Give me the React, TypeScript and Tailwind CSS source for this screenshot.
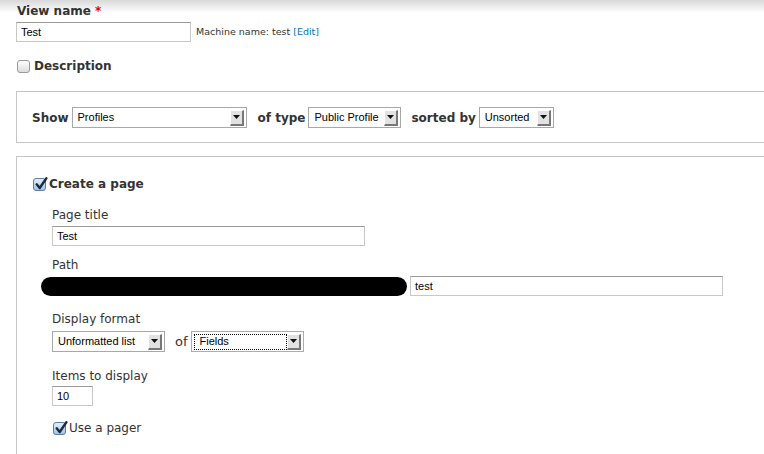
import React from "react";

const labelFont = "font-['DejaVu_Sans',sans-serif]";
const fieldFont = "font-['Liberation_Sans',Arial,sans-serif]";

const Checkbox = ({ checked }: { checked?: boolean }) => (
  <span
    className={`relative inline-flex h-[13px] w-[13px] shrink-0 items-center justify-center rounded-[3px] border ${
      checked
        ? "border-[#5d7fa6] bg-gradient-to-b from-[#e4effb] to-[#9fc3ea]"
        : "border-[#9a9a9a] bg-gradient-to-b from-white to-[#dcdcdc]"
    }`}
  >
    {checked && (
      <svg viewBox="0 0 13 13" className="absolute -top-[2px] left-[0px] h-[14px] w-[14px]">
        <path d="M2.5 6.8 L5.3 10.2 L11.5 1.2" fill="none" stroke="#1d2a3a" strokeWidth="2.2" strokeLinecap="round" strokeLinejoin="round" />
      </svg>
    )}
  </span>
);

const TextInput = ({ value, width }: { value: string; width: string }) => (
  <div
    className={`${width} ${fieldFont} flex h-[20px] shrink-0 items-center border border-[#c8c8c8] border-t-[#999] bg-white pl-[4px] text-[11px] text-black`}
  >
    {value}
  </div>
);

const Select = ({ value, width, focused }: { value: string; width: string; focused?: boolean }) => (
  <div
    className={`${width} ${fieldFont} flex h-[21px] shrink-0 items-center border bg-white text-[11px] text-black ${
      focused ? "border-[#8fb2e4]" : "border-[#a8a8a8]"
    }`}
  >
    <span
      className={`flex h-[16px] flex-1 items-center pl-[5px] ${
        focused ? "ml-[2px] border border-dotted border-black pl-[3px]" : ""
      }`}
    >
      {value}
    </span>
    <span className="mr-[2px] flex h-[16px] w-[14px] items-center justify-center border-[1px] border-b-[2px] border-r-[2px] border-t-white border-l-white border-b-[#777] border-r-[#777] bg-[#e2e2e2]">
      <svg viewBox="0 0 7 4" className="h-[4px] w-[7px]">
        <path d="M0 0 H7 L3.5 4 Z" fill="#111" />
      </svg>
    </span>
  </div>
);

const Label = ({ children }: { children: React.ReactNode }) => (
  <div className={`${labelFont} text-[12px] leading-[14px] text-[#333]`}>{children}</div>
);

export default function App() {
  return (
    <div className="relative h-[454px] w-[764px] overflow-hidden bg-white">
      {/* top toolbar shadow */}
      <div className="pointer-events-none absolute inset-x-0 top-0 h-[13px] bg-gradient-to-b from-black/15 to-transparent" />

      <div className="pl-[16px] pt-[4px]">
        <div className={`${labelFont} pl-[1px] text-[12px] font-bold leading-[14px] text-[#333]`}>
          View name <span className="text-[#e00]">*</span>
        </div>

        <div className="mt-[4px] flex items-center">
          <TextInput value="Test" width="w-[175px]" />
          <span className={`${labelFont} ml-[5px] text-[9.5px] text-[#333]`}>
            Machine name: test <a className="text-[#0074bd]">[Edit]</a>
          </span>
        </div>

        <div className="mt-[16px] flex h-[16px] items-center pl-[1px]">
          <Checkbox />
          <span className={`${labelFont} ml-[4px] text-[12px] font-bold text-[#333]`}>Description</span>
        </div>

        <div className="mt-[17px] flex h-[52px] w-[760px] items-center border border-r-0 border-[#c6c6c6] pl-[15px] pt-[1px]">
          <span className={`${labelFont} mr-[3px] text-[12px] font-bold text-[#333]`}>Show</span>
          <Select value="Profiles" width="w-[175px]" />
          <span className={`${labelFont} ml-[11px] mr-[3px] text-[12px] font-bold text-[#333]`}>of type</span>
          <Select value="Public Profile" width="w-[93px]" />
          <span className={`${labelFont} ml-[10px] mr-[3px] text-[12px] font-bold text-[#333]`}>sorted by</span>
          <Select value="Unsorted" width="w-[75px]" />
        </div>

        <div className="mt-[13px] h-[320px] w-[760px] border border-r-0 border-b-0 border-[#c6c6c6] px-[16px] pt-[19px]">
          <div className="flex h-[16px] items-center">
            <Checkbox checked />
            <span className={`${labelFont} ml-[3px] text-[12px] font-bold text-[#333]`}>Create a page</span>
          </div>

          <div className="pl-[19px]">
            <div className="mt-[16px]">
              <Label>Page title</Label>
            </div>
            <div className="mt-[4px]">
              <TextInput value="Test" width="w-[313px]" />
            </div>

            <div className="mt-[12px]">
              <Label>Path</Label>
            </div>
            <div className="mt-[4px] flex items-center">
              <div className="-ml-[11px] h-[19px] w-[366px] rounded-full bg-black" />
              <div className="ml-[3px]">
                <TextInput value="test" width="w-[313px]" />
              </div>
            </div>

            <div className="mt-[16px]">
              <Label>Display format</Label>
            </div>
            <div className="mt-[5px] flex items-center">
              <Select value="Unformatted list" width="w-[113px]" />
              <span className={`${labelFont} ml-[10px] mr-[3px] text-[13px] text-[#333]`}>of</span>
              <Select value="Fields" width="w-[113px]" focused />
            </div>

            <div className="mt-[17px]">
              <Label>Items to display</Label>
            </div>
            <div className="mt-[3px]">
              <TextInput value="10" width="w-[41px]" />
            </div>

            <div className="mt-[14px] flex h-[16px] items-center pl-[1px]">
              <Checkbox checked />
              <span className={`${labelFont} ml-[3px] text-[12px] text-[#333]`}>Use a pager</span>
            </div>
          </div>
        </div>
      </div>
    </div>
  );
}
